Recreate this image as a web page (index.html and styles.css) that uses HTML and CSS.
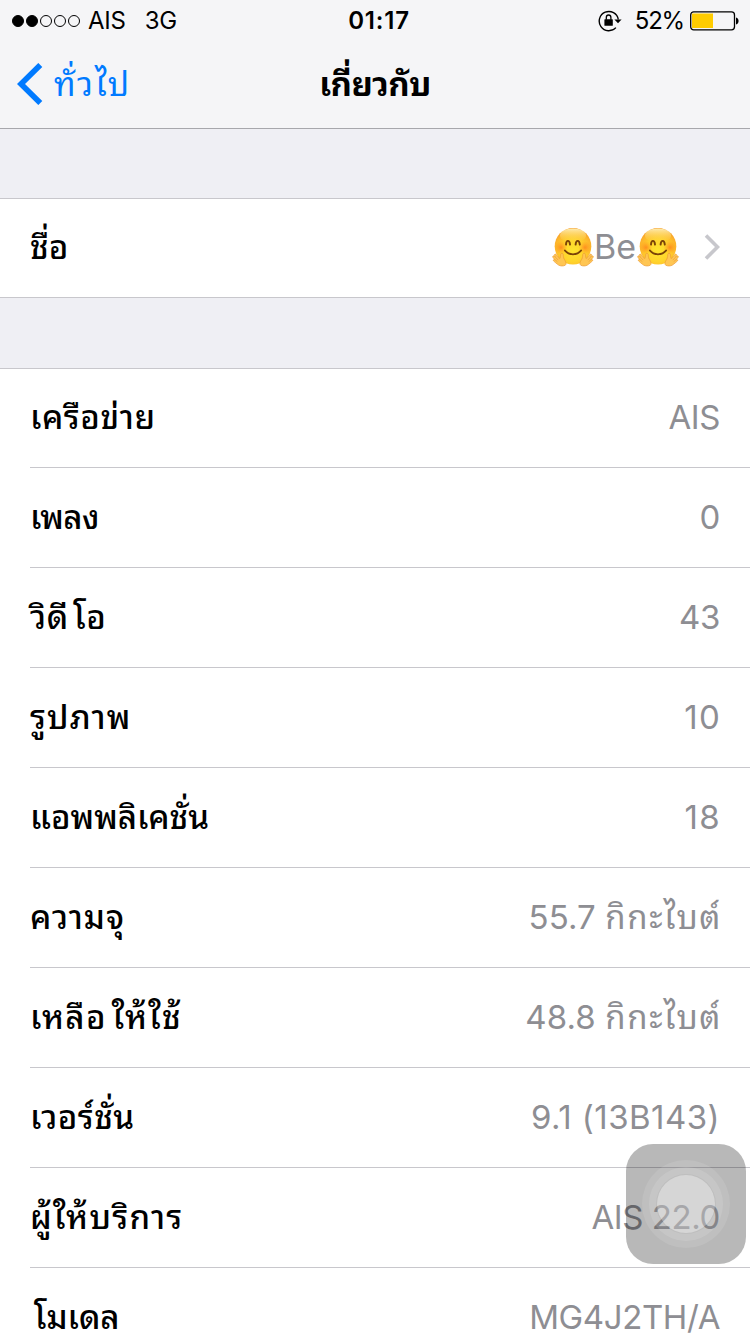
FILE: index.html
```
<!DOCTYPE html>
<html lang="th">
<head>
<meta charset="utf-8">
<title>เกี่ยวกับ</title>
<link rel="stylesheet" href="styles.css">
</head>
<body>
<svg class="defs" width="0" height="0" aria-hidden="true">
  <defs>
    <radialGradient id="face" cx="50%" cy="62%" r="60%">
      <stop offset="0" stop-color="#ffe52e"/>
      <stop offset=".5" stop-color="#ffd42c"/>
      <stop offset=".85" stop-color="#fdb52b"/>
      <stop offset="1" stop-color="#f6a02c"/>
    </radialGradient>
    <linearGradient id="shine" x1="0" y1="0" x2="0" y2="1">
      <stop offset="0" stop-color="#fff6c0" stop-opacity=".9"/>
      <stop offset="1" stop-color="#ffd84a" stop-opacity="0"/>
    </linearGradient>
    <radialGradient id="blush">
      <stop offset="0" stop-color="#ff7a1c" stop-opacity=".75"/>
      <stop offset="1" stop-color="#ff8a1c" stop-opacity="0"/>
    </radialGradient>
    <symbol id="hug" viewBox="0 0 42 40">
      <circle cx="21" cy="19.3" r="18.3" fill="url(#face)"/>
      <ellipse cx="21" cy="8.5" rx="13" ry="7" fill="url(#shine)"/>
      <circle cx="9" cy="20.5" r="6.500" fill="url(#blush)"/>
      <circle cx="33" cy="20.5" r="6.500" fill="url(#blush)"/>
      <path d="M14 17.600c.2-5 3.600-5 4 0M23.600 17.600c.4-5 3.800-5 4.200 0" fill="none" stroke="#7a4308" stroke-width="1.900" stroke-linecap="round"/>
      <path d="M12.800 23.400c4.200 5.200 12.200 5.200 16.400 0" fill="none" stroke="#7a4308" stroke-width="1.700" stroke-linecap="round"/>
      <g id="hand" fill="#ffc653" stroke="#ec9c35" stroke-width=".7" stroke-linejoin="round">
        <path d="M13.200 38.300c-2.600 1.200-6 .8-8-1.200l-3.500-3c-.9-1 .1-2 1.100-1.400l-1.900-2.400c-.6-1.200.6-1.900 1.400-1.100l1 1-.8-2c-.2-1.300 1.200-1.600 1.700-.6l3.400 4.200c.9-.9.8-2.900 1.100-4.600.4-1.400 2.300-1.200 2.500.2.200 1.800.1 3 .9 4.600 1.300 2.100 2.900 4.800 1.100 6.300z"/>
        <path d="M3 32.700l2.400 2M3.600 30.300l2.700 2.900" fill="none"/>
      </g>
      <use href="#hand" transform="matrix(-1 0 0 1 42 0)"/>
    </symbol>
  </defs>
</svg>
<header class="top">
  <div class="status">
    <div class="status-left">
      <span class="signal"><i class="dot on"></i><i class="dot on"></i><i class="dot"></i><i class="dot"></i><i class="dot"></i></span>
      <span class="carrier">AIS</span><span class="net">3G</span>
    </div>
    <div class="clock">01:17</div>
    <div class="status-right">
      <svg class="lock" viewBox="0 0 24 22" width="24" height="22">
        <path d="M17.900 17.600A9.600 9.600 0 1 1 20.300 9.500" fill="none" stroke="#000" stroke-width="1.400"/>
        <path d="M16.400 9.400h7.200L20 13.200z"/>
        <rect x="6.400" y="9.200" width="8.400" height="6.600" rx=".6"/>
        <path d="M8.300 9.800V7.500a2.300 2.500 0 0 1 4.600 0v2.300" fill="none" stroke="#000" stroke-width="1.300"/>
      </svg>
      <span class="percent">52%</span>
      <svg class="battery" viewBox="0 0 49 20" width="49" height="20">
        <rect x=".7" y=".9" width="43.800" height="17.900" rx="3" fill="none" stroke="#000" stroke-width="1.300"/>
        <rect x="2" y="2.500" width="21" height="14.500" fill="#fc0"/>
        <path d="M46 6.500c3.400.5 3.400 6.500 0 7z"/>
      </svg>
    </div>
  </div>
  <nav class="nav">
    <a class="back"><svg class="back-icon" viewBox="0 0 26 42" width="26" height="42"><path d="M23.300 2L4 21l19.300 19" fill="none" stroke="#007aff" stroke-width="5.700"/></svg><span class="back-text">ทั่วไป</span></a>
    <h1 class="title">เกี่ยวกับ</h1>
    <span></span>
  </nav>
</header>
<main>
  <section class="group">
    <div class="row"><span class="label">ชื่อ</span><span class="value name"><svg class="emoji" role="img" aria-label="🤗"><use href="#hug"/></svg><span class="be">Be</span><svg class="emoji" role="img" aria-label="🤗"><use href="#hug"/></svg><svg class="chevron" viewBox="0 0 16 26" width="16" height="26"><path d="M2 1.500L13.500 13 2 24.500" fill="none" stroke="#c7c7cc" stroke-width="3.600"/></svg></span></div>
  </section>
  <section class="group">
    <div class="row"><span class="label network">เครือข่าย</span><span class="value">AIS</span></div>
    <div class="row"><span class="label songs">เพลง</span><span class="value">0</span></div>
    <div class="row"><span class="label videos">วิดี<span class="tail">โอ</span></span><span class="value">43</span></div>
    <div class="row"><span class="label photos">รูปภาพ</span><span class="value count">10</span></div>
    <div class="row"><span class="label">แอพพลิเคชั่น</span><span class="value count">18</span></div>
    <div class="row"><span class="label capacity">ความจุ</span><span class="value size">55.7 <span class="unit">กิกะไบต์</span></span></div>
    <div class="row"><span class="label available">เหลือ<span class="tail">ให้ใช้</span></span><span class="value size">48.8 <span class="unit">กิกะไบต์</span></span></div>
    <div class="row"><span class="label version">เวอร์ชั่น</span><span class="value build">9.1 (13B143)</span></div>
    <div class="row"><span class="label provider">ผู้ให้บริการ</span><span class="value">AIS 22.0</span></div>
    <div class="row"><span class="label model">โมเดล</span><span class="value">MG4J2TH/A</span></div>
  </section>
</main>
<div class="assist"><div class="ring outer"><div class="ring middle"><div class="ring inner"></div></div></div></div>
</body>
</html>
```
FILE: styles.css
```
* { box-sizing: border-box; }
body {
  margin: 0;
  width: 750px;
  height: 1334px;
  overflow: hidden;
  background: #efeff4;
  color: #000;
  font-family: Inter, "Noto Sans Thai Looped", "Noto Looped Thai", Loma, Garuda, Waree, Umpush, "Noto Serif Thai", "Noto Sans Thai", sans-serif;
  font-size: 33px;
}
svg { display: block; flex: none; }
.defs { position: absolute; }
.top { height: 129px; background: #f5f5f7; border-bottom: 1px solid #a7a7ac; }
.status, .nav { display: grid; grid-template-columns: 1fr auto 1fr; align-items: center; }
.status { height: 41px; font-size: 24px; line-height: 41px; padding: 0 11px 0 12px; }
.status-left, .status-right, .signal { display: flex; align-items: center; }
.status-right { justify-content: flex-end; }
.signal { gap: 2px; }
.dot { width: 12px; height: 12px; border: 1px solid #000; border-radius: 50%; }
.dot.on { background: #000; }
.carrier { margin-left: 8px; letter-spacing: -.2px; }
.net { margin-left: 19px; letter-spacing: -.4px; }
.clock { font-weight: 600; letter-spacing: .8px; padding-left: 7px; }
.lock { margin-right: 13px; }
.percent { margin-right: 6px; letter-spacing: -1.2px; }
.nav { height: 87px; padding: 0 17px; }
.back { display: flex; align-items: center; color: #007aff; }
.back-icon { margin-top: -2px; }
.back-text { margin-left: 11px; line-height: 87px; letter-spacing: 1.9px; }
.title { margin: 0; font-size: 33px; font-weight: 700; line-height: 87px; letter-spacing: -.5px; }
.group { margin-top: 69px; background: #fff; border-top: 1px solid #c8c7cc; }
.group + .group { margin-top: 70px; }
.row {
  display: flex;
  justify-content: space-between;
  height: 100px;
  margin-left: 30px;
  padding-right: 30px;
  border-bottom: 1px solid #c8c7cc;
  line-height: 98px;
}
.row:first-child { height: 99px; line-height: 96px; }
.group:first-child .row { margin-left: 0; padding-left: 30px; }
.label, .value, .back-text, .title { white-space: nowrap; }
.label { font-weight: 500; }
.network { letter-spacing: .6px; }
.songs { letter-spacing: -.5px; }
.videos { letter-spacing: .8px; }
.videos .tail { margin-left: 4px; }
.photos { letter-spacing: 1.2px; }
.capacity { letter-spacing: 1px; }
.available { letter-spacing: 1.3px; }
.available .tail { margin-left: 5px; }
.version { letter-spacing: .5px; }
.provider { letter-spacing: 1.3px; }
.model { padding-left: 4px; }
.value { color: #8e8e93; letter-spacing: -.4px; }
.count { letter-spacing: 1.3px; margin-right: -1px; }
.size { letter-spacing: .1px; }
.unit { letter-spacing: 1.6px; margin-right: -2px; }
.build { letter-spacing: .45px; }
.name { display: flex; align-items: center; height: 96px; }
.be { font-size: 34px; letter-spacing: 0; margin: 0 1px 0 0; }
.emoji { width: 42px; height: 40px; }
.chevron { margin-left: 25px; }
.assist {
  position: absolute;
  left: 626px;
  top: 1144px;
  display: grid;
  place-items: center;
  width: 120px;
  height: 120px;
  border-radius: 27px;
  background: rgba(0, 0, 0, .28);
}
.ring { display: grid; place-items: center; border-radius: 50%; }
.outer { width: 88px; height: 88px; background: rgba(255, 255, 255, .1); }
.middle { width: 74px; height: 74px; background: rgba(255, 255, 255, .12); }
.inner { width: 58px; height: 58px; background: rgba(255, 255, 255, .28); box-shadow: 0 0 0 1px rgba(0, 0, 0, .04); }
```
